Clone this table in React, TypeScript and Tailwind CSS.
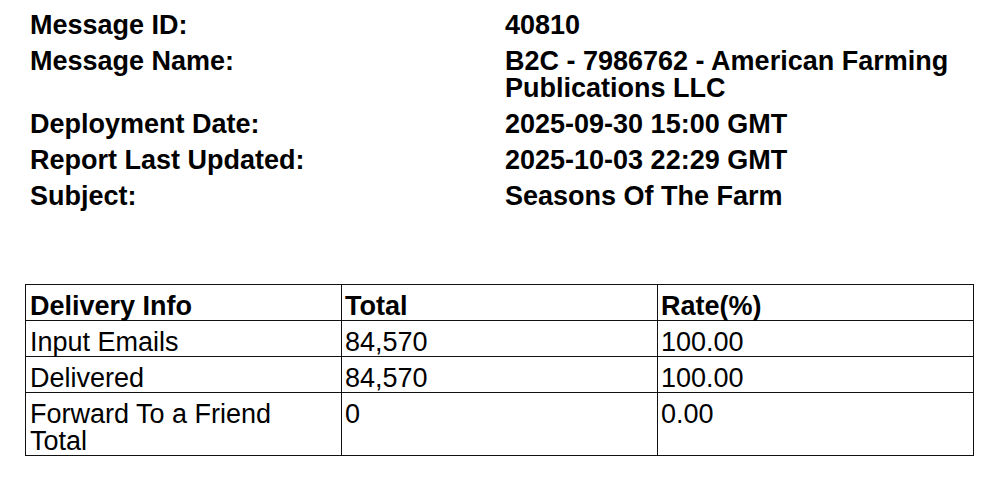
import React from 'react';

const details = [
  { label: 'Message ID:', value: '40810' },
  { label: 'Message Name:', value: 'B2C - 7986762 - American Farming Publications LLC' },
  { label: 'Deployment Date:', value: '2025-09-30 15:00 GMT' },
  { label: 'Report Last Updated:', value: '2025-10-03 22:29 GMT' },
  { label: 'Subject:', value: 'Seasons Of The Farm' },
];

const rows = [
  { info: 'Input Emails', total: '84,570', rate: '100.00' },
  { info: 'Delivered', total: '84,570', rate: '100.00' },
  { info: 'Forward To a Friend Total', total: '0', rate: '0.00' },
];

export default function App() {
  return (
    <div className="min-h-[494px] w-[1000px] bg-white text-black font-['Liberation_Sans',Arial,sans-serif] text-[27px] leading-[27px]">
      {/* Message details */}
      <div className="pl-[30px] pt-[12px] grid grid-cols-[475px_465px] gap-y-[9px] font-bold">
        {details.map((d) => (
          <React.Fragment key={d.label}>
            <div>{d.label}</div>
            <div>{d.value}</div>
          </React.Fragment>
        ))}
      </div>

      {/* Delivery table */}
      <table className="mt-[74px] ml-[25px] w-[949px] table-fixed border-collapse">
        <colgroup>
          <col className="w-1/3" />
          <col className="w-1/3" />
          <col className="w-1/3" />
        </colgroup>
        <thead>
          <tr>
            <th className="border border-[#111] pl-[4px] pr-[24px] pt-[8px] pb-0 text-left align-top font-bold">Delivery Info</th>
            <th className="border border-[#111] pl-[3px] pr-[4px] pt-[8px] pb-0 text-left align-top font-bold">Total</th>
            <th className="border border-[#111] pl-[3px] pr-[4px] pt-[8px] pb-0 text-left align-top font-bold">Rate(%)</th>
          </tr>
        </thead>
        <tbody>
          {rows.map((r) => (
            <tr key={r.info}>
              <td className="border border-[#111] pl-[4px] pr-[24px] pt-[8px] pb-0 align-top">{r.info}</td>
              <td className="border border-[#111] pl-[3px] pr-[4px] pt-[8px] pb-0 align-top">{r.total}</td>
              <td className="border border-[#111] pl-[3px] pr-[4px] pt-[8px] pb-0 align-top">{r.rate}</td>
            </tr>
          ))}
        </tbody>
      </table>
    </div>
  );
}
